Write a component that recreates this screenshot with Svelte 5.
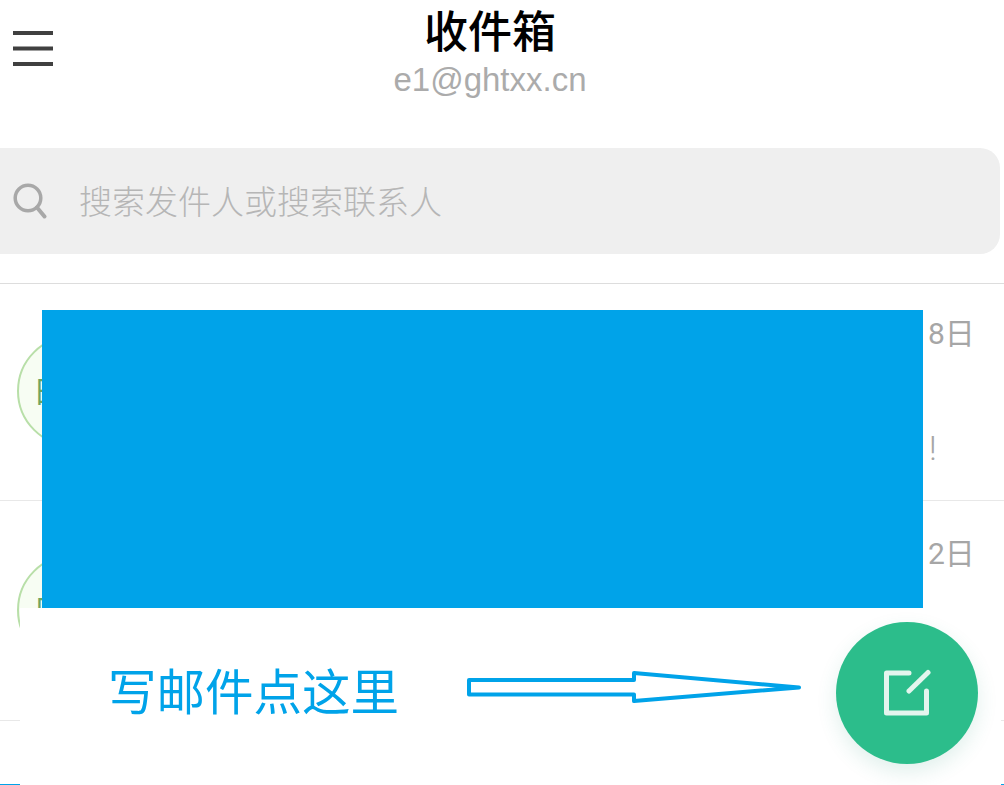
<script>
  const mails = [
    { initial: '日', date: '8日', tail: '!' },
    { initial: '日', date: '2日', tail: '' },
    { initial: '', date: '', tail: '' }
  ]
</script>

<main class="page">
  <header class="top">
    <button class="menu" aria-label="菜单">
      <svg width="40" height="36" viewBox="0 0 40 36">
        <path d="M0 2H40M0 17.500H40M0 33H40" fill="none" stroke="#404040" stroke-width="4" stroke-linecap="round" />
      </svg>
    </button>
    <div class="heading">
      <h1>收件箱</h1>
      <p>e1@ghtxx.cn</p>
    </div>
  </header>

  <div class="search">
    <svg width="34" height="36" viewBox="0 0 34 36">
      <circle cx="15" cy="15" r="12.800" fill="none" stroke="#a8a8a8" stroke-width="3.500" />
      <path d="M24 24.500L31.500 33.500" fill="none" stroke="#a8a8a8" stroke-width="4" stroke-linecap="round" />
    </svg>
    <span>搜索发件人或搜索联系人</span>
  </div>

  <ul class="list">
    {#each mails as mail}
      <li class="row">
        {#if mail.initial}
          <div class="avatar">{mail.initial}</div>
        {/if}
        <div class="side">
          <span class="date">{mail.date}</span>
          <span class="tail">{mail.tail}</span>
        </div>
      </li>
    {/each}
  </ul>

  <div class="cover"></div>

  <div class="hint">
    <span class="label">写邮件点这里</span>
    <svg class="arrow" width="340" height="40" viewBox="0 0 340 40">
      <path d="M2 10H167V3L332 17.500L167 31V24.500H2Z" fill="none" stroke="#00a3e9" stroke-width="4" stroke-linejoin="round" />
    </svg>
  </div>

  <button class="compose" aria-label="写邮件">
    <svg width="48" height="48" viewBox="0 0 48 48">
      <path d="M26 4H3.500V44H43.500V22" fill="none" stroke="#e4f5ee" stroke-width="5" stroke-linecap="round" stroke-linejoin="round" />
      <path d="M26 22L45 3.500" fill="none" stroke="#e4f5ee" stroke-width="5" stroke-linecap="round" />
    </svg>
  </button>
</main>

<style>
  :global(body) {
    background: #fff;
  }

  .page {
    position: relative;
    width: 1004px;
    height: 785px;
    overflow: hidden;
    font-family: "Noto Sans CJK SC", sans-serif;
  }

  .top {
    display: grid;
    grid-template-columns: 1fr auto 1fr;
    height: 148px;
    padding-right: 24px;
    box-sizing: border-box;
  }

  .menu {
    justify-self: start;
    align-self: start;
    margin: 31px 0 0 13px;
    padding: 0;
    border: 0;
    background: none;
    line-height: 0;
  }

  .heading {
    grid-column: 2;
    text-align: center;
  }

  h1 {
    margin: 0;
    padding-top: 1px;
    font-size: 44px;
    font-weight: 500;
    line-height: 56px;
    color: #000;
  }

  .heading p {
    margin: 0;
    font-family: "Liberation Sans", sans-serif;
    font-size: 33px;
    font-weight: 400;
    line-height: 46px;
    color: #ababab;
  }

  .search {
    display: flex;
    align-items: center;
    gap: 32px;
    width: 1000px;
    height: 106px;
    padding-left: 13px;
    box-sizing: border-box;
    background: #efefef;
    border-radius: 0 20px 20px 0;
  }

  .search span {
    margin-top: -2px;
    font-size: 33px;
    font-weight: 300;
    color: #b6b6b6;
  }

  .list {
    margin: 29px 0 0;
    padding: 0;
    list-style: none;
    border-bottom: 1px solid #00a3e9;
  }

  .row {
    display: flex;
    align-items: flex-start;
    justify-content: space-between;
    height: 217px;
    box-sizing: border-box;
    border-top: 1px solid #dddddd;
  }

  .row:nth-child(2) {
    height: 220px;
    border-top-color: #e8e8e8;
  }

  .row:nth-child(2) .date {
    margin-top: 33px;
  }

  .row:nth-child(3) {
    height: 64px;
    border-top-color: #e8e8e8;
  }

  .avatar {
    align-self: center;
    width: 112px;
    height: 112px;
    margin: -2px 0 0 17px;
    box-sizing: border-box;
    padding-left: 14px;
    border: 2px solid #b8dfa8;
    border-radius: 50%;
    background: #f7fdf3;
    color: #6fa561;
    font-size: 30px;
    font-weight: 400;
    line-height: 104px;
  }

  .side {
    display: flex;
    flex-direction: column;
    width: 76px;
    font-family: Roboto, "Noto Sans CJK SC", sans-serif;
    color: #a6a6a6;
    font-size: 30px;
    font-weight: 400;
  }

  .date {
    margin-top: 30px;
    line-height: 40px;
  }

  .tail {
    margin-top: 74px;
    padding-left: 1px;
    font-size: 34px;
    font-weight: 300;
    line-height: 40px;
  }

  .cover {
    position: absolute;
    left: 42px;
    top: 310px;
    width: 881px;
    height: 298px;
    background: #00a3e9;
  }

  .hint {
    position: absolute;
    left: 20px;
    top: 608px;
    width: 981px;
    height: 177px;
    display: flex;
    align-items: flex-start;
    background: #fff;
  }

  .label {
    margin: 46px 0 0 88px;
    font-size: 48.500px;
    line-height: 70px;
    font-weight: 400;
    color: #00a3e9;
  }

  .arrow {
    margin: 62px 0 0 68px;
  }

  .compose {
    position: absolute;
    left: 836px;
    top: 622px;
    display: flex;
    align-items: center;
    justify-content: center;
    width: 142px;
    height: 142px;
    padding: 0;
    border: 0;
    border-radius: 50%;
    background: #2cbd8b;
    box-shadow: 0 8px 20px rgba(44, 150, 120, 0.14);
  }
</style>
